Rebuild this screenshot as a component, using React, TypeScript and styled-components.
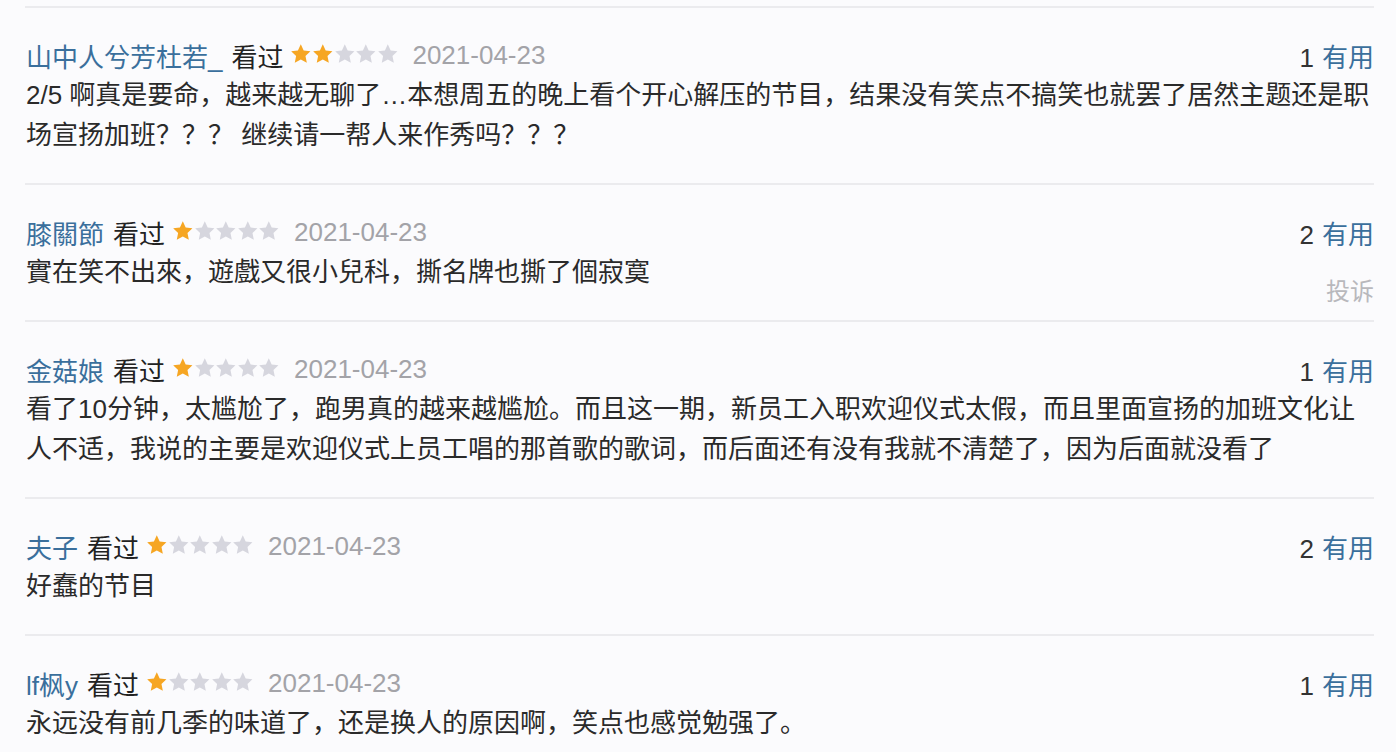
import styled, { createGlobalStyle } from 'styled-components';

const GlobalStyle = createGlobalStyle`
  html, body {
    margin: 0;
    padding: 0;
    background: #fbfbfd;
  }
  body {
    font-family: "Liberation Sans", "Noto Sans CJK SC", sans-serif;
  }
`;

const List = styled.div`
  padding: 6px 22px 0 25px;
  width: 1396px;
  height: 752px;
  box-sizing: border-box;
  overflow: hidden;
`;

const Item = styled.div`
  position: relative;
  border-top: 2px solid #ebebee;
  padding: 27px 0 28px 1px;
`;

const Header = styled.div`
  display: flex;
  align-items: center;
  height: 40px;
  font-size: 26px;
`;

const Name = styled.span`
  color: #3a6f9c;
`;

const Seen = styled.span`
  color: #222;
  margin-left: 9px;
`;

const Stars = styled.span`
  display: inline-flex;
  margin: 0 14px 0 7px;
  position: relative;
  top: -1px;
`;

const DateText = styled.span`
  color: #a3a3a8;
`;

const Votes = styled.span`
  margin-left: auto;
  color: #333;
`;

const Useful = styled.span`
  color: #3a6f9c;
  margin-left: 8px;
`;

const Body = styled.div`
  font-size: 26px;
  line-height: 40px;
  color: #2a2a2a;
`;

const Report = styled.span`
  position: absolute;
  right: 0;
  bottom: 13px;
  font-size: 24px;
  color: #b8b8bc;
`;

const Star = ({ on }: { on: boolean }) => (
  <svg width="21.6" height="22" viewBox="0 0 24 24">
    <path
      d="M12 1.2l3.2 6.9 7.5.9-5.5 5.2 1.5 7.4L12 18l-6.7 3.6 1.5-7.4L1.3 9l7.5-.9z"
      fill={on ? '#f6a623' : '#d6d6de'}
    />
  </svg>
);

type Review = {
  name: string;
  rating: number;
  votes: number;
  text: string;
  report?: boolean;
};

const reviews: Review[] = [
  {
    name: '山中人兮芳杜若_',
    rating: 2,
    votes: 1,
    text: '2/5 啊真是要命，越来越无聊了…本想周五的晚上看个开心解压的节目，结果没有笑点不搞笑也就罢了居然主题还是职场宣扬加班？？？ 继续请一帮人来作秀吗？？？',
  },
  {
    name: '膝關節',
    rating: 1,
    votes: 2,
    text: '實在笑不出來，遊戲又很小兒科，撕名牌也撕了個寂寞',
    report: true,
  },
  {
    name: '金菇娘',
    rating: 1,
    votes: 1,
    text: '看了10分钟，太尴尬了，跑男真的越来越尴尬。而且这一期，新员工入职欢迎仪式太假，而且里面宣扬的加班文化让人不适，我说的主要是欢迎仪式上员工唱的那首歌的歌词，而后面还有没有我就不清楚了，因为后面就没看了',
  },
  { name: '夫子', rating: 1, votes: 2, text: '好蠢的节目' },
  {
    name: 'lf枫y',
    rating: 1,
    votes: 1,
    text: '永远没有前几季的味道了，还是换人的原因啊，笑点也感觉勉强了。',
  },
];

export default function App() {
  return (
    <>
      <GlobalStyle />
      <List>
        {reviews.map((r) => (
          <Item key={r.name}>
            <Header>
              <Name>{r.name}</Name>
              <Seen>看过</Seen>
              <Stars>
                {[0, 1, 2, 3, 4].map((i) => (
                  <Star key={i} on={i < r.rating} />
                ))}
              </Stars>
              <DateText>2021-04-23</DateText>
              <Votes>
                {r.votes}
                <Useful>有用</Useful>
              </Votes>
            </Header>
            <Body>{r.text}</Body>
            {r.report && <Report>投诉</Report>}
          </Item>
        ))}
      </List>
    </>
  );
}
